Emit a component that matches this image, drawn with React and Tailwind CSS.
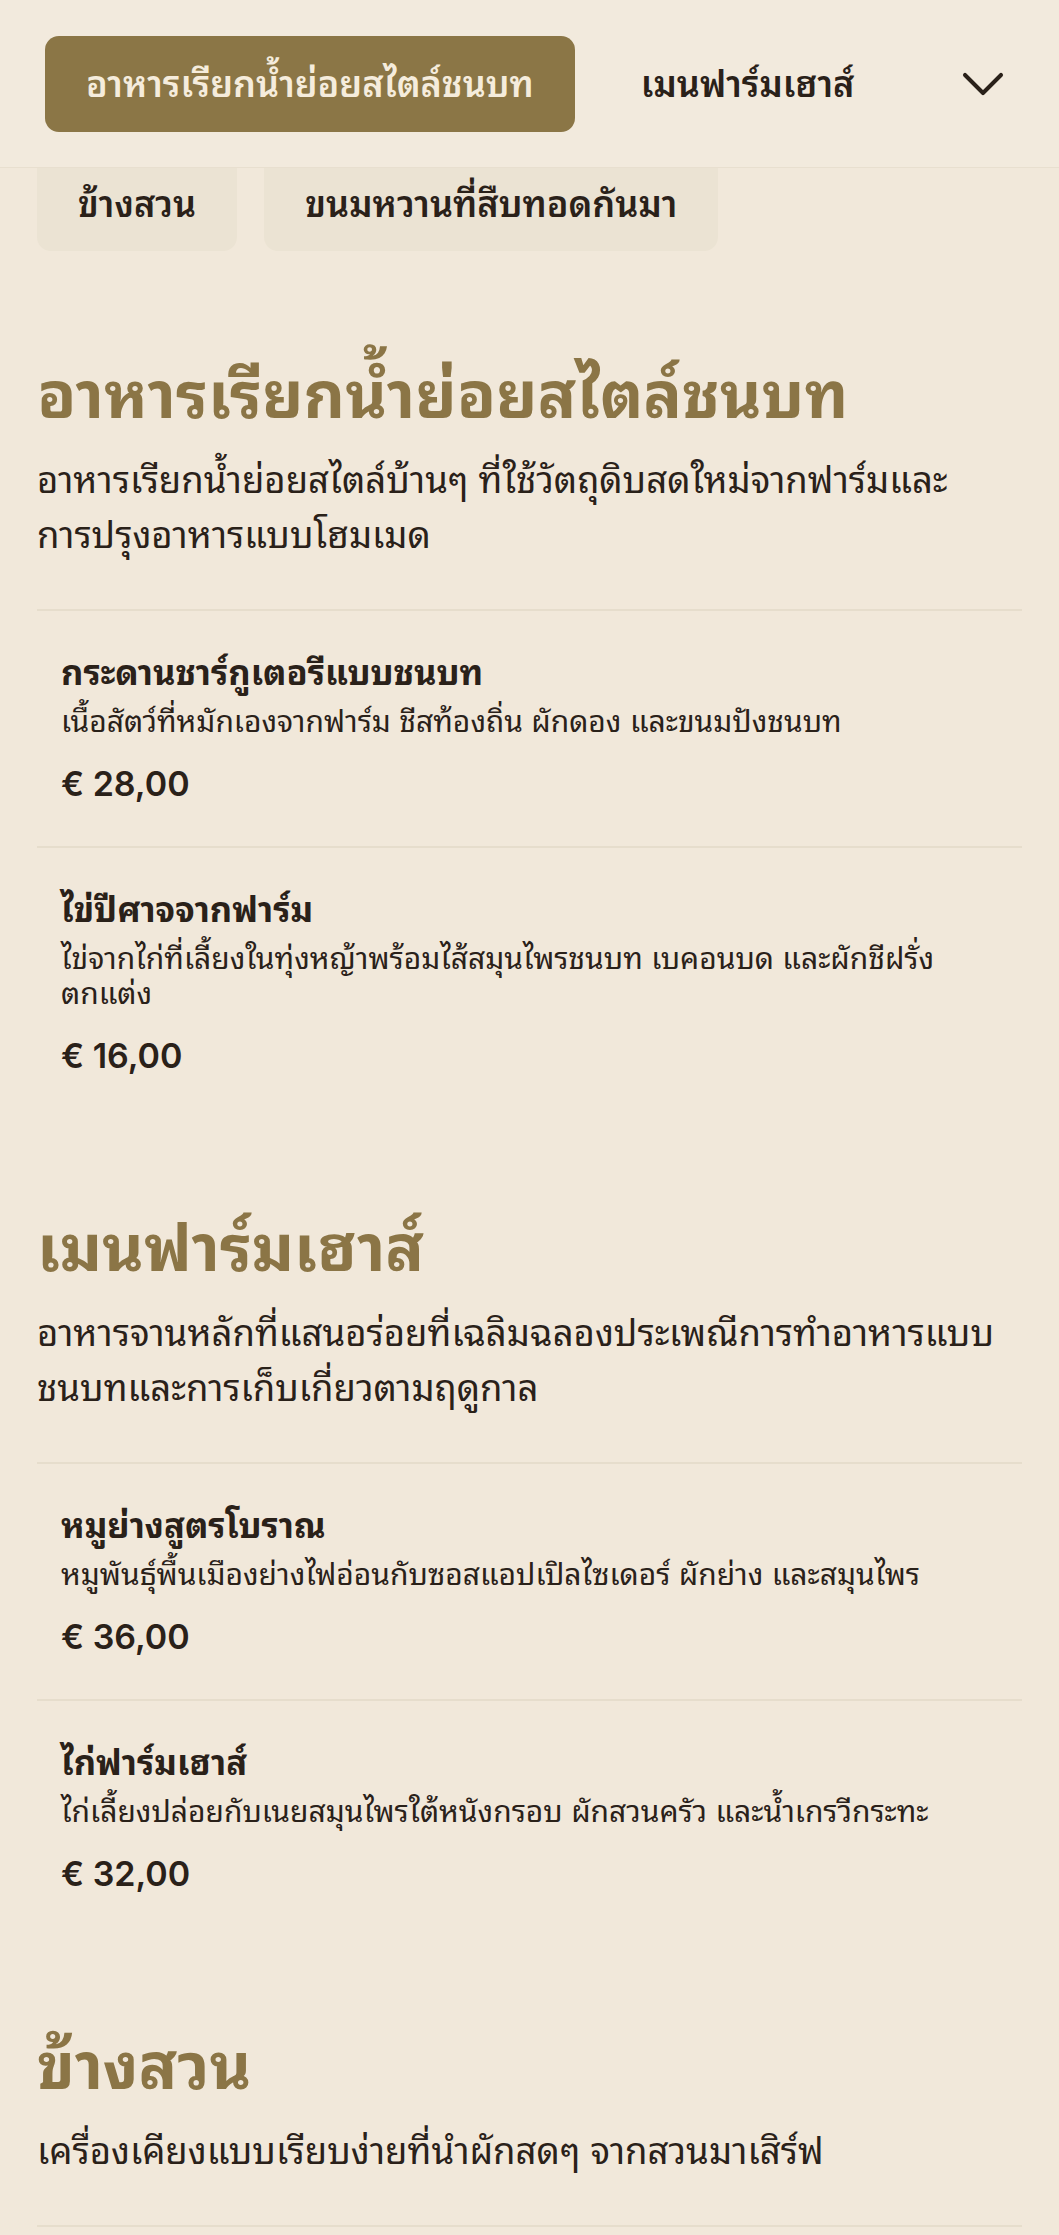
import React from "react";
import { ChevronDown } from "lucide-react";

const sections = [
  {
    title: "อาหารเรียกน้ำย่อยสไตล์ชนบท",
    desc: "อาหารเรียกน้ำย่อยสไตล์บ้านๆ ที่ใช้วัตถุดิบสดใหม่จากฟาร์มและการปรุงอาหารแบบโฮมเมด",
    items: [
      {
        name: "กระดานชาร์กูเตอรีแบบชนบท",
        desc: "เนื้อสัตว์ที่หมักเองจากฟาร์ม ชีสท้องถิ่น ผักดอง และขนมปังชนบท",
        price: "€ 28,00",
      },
      {
        name: "ไข่ปีศาจจากฟาร์ม",
        desc: "ไข่จากไก่ที่เลี้ยงในทุ่งหญ้าพร้อมไส้สมุนไพรชนบท เบคอนบด และผักชีฝรั่งตกแต่ง",
        price: "€ 16,00",
      },
    ],
  },
  {
    title: "เมนฟาร์มเฮาส์",
    desc: "อาหารจานหลักที่แสนอร่อยที่เฉลิมฉลองประเพณีการทำอาหารแบบชนบทและการเก็บเกี่ยวตามฤดูกาล",
    items: [
      {
        name: "หมูย่างสูตรโบราณ",
        desc: "หมูพันธุ์พื้นเมืองย่างไฟอ่อนกับซอสแอปเปิลไซเดอร์ ผักย่าง และสมุนไพร",
        price: "€ 36,00",
      },
      {
        name: "ไก่ฟาร์มเฮาส์",
        desc: "ไก่เลี้ยงปล่อยกับเนยสมุนไพรใต้หนังกรอบ ผักสวนครัว และน้ำเกรวีกระทะ",
        price: "€ 32,00",
      },
    ],
  },
  {
    title: "ข้างสวน",
    desc: "เครื่องเคียงแบบเรียบง่ายที่นำผักสดๆ จากสวนมาเสิร์ฟ",
    items: [],
  },
];

const font = {
  fontFamily:
    'Inter, "Noto Sans Thai Looped", "Noto Looped Thai", "Noto Serif Thai", Garuda, Loma, Tahoma, "Noto Sans Thai", sans-serif',
};

export default function App() {
  return (
    <div className="h-[2235px] overflow-hidden bg-[#f1e8da] text-[#2a2119]" style={font}>
      <header className="h-[168px] bg-[#f2eadd] border-b border-[#e8dfcf] flex items-center pl-[45px] pr-[40px]">
        <div className="flex items-center gap-[25px] flex-1">
          <button className="h-[96px] px-[41px] rounded-[14px] bg-[#8b7646] text-[#f5ecdc] text-[36px] font-semibold leading-none whitespace-nowrap">
            อาหารเรียกน้ำย่อยสไตล์ชนบท
          </button>
          <button className="h-[96px] px-[41px] text-[36px] font-semibold leading-none text-[#2a2119] whitespace-nowrap">
            เมนฟาร์มเฮาส์
          </button>
        </div>
        <ChevronDown size={72} strokeWidth={1.35} className="text-[#2a2119] shrink-0" />
      </header>

      <div className="flex gap-[27px] px-[37px]">
        <div className="h-[83px] pb-[23px] px-[41px] rounded-b-[14px] bg-[#ebe3d3] flex items-end text-[36px] font-semibold leading-[48px] whitespace-nowrap">
          ข้างสวน
        </div>
        <div className="h-[83px] pb-[23px] px-[41px] rounded-b-[14px] bg-[#ebe3d3] flex items-end text-[36px] font-semibold leading-[48px] whitespace-nowrap">
          ขนมหวานที่สืบทอดกันมา
        </div>
      </div>

      <main className="px-[37px] pt-[104px]">
        {sections.map((s, i) => (
          <section key={i} className="mb-[90px]">
            <h2 className="text-[64px] font-bold leading-[80px] text-[#8b7546]">{s.title}</h2>
            <p className="mt-[18px] text-[36.5px] leading-[55px] pr-[20px]">{s.desc}</p>
            <div className="mt-[46px]">
              {s.items.length === 0 && <div className="border-t-2 border-[#e6ddcc] h-[40px]" />}
              {s.items.map((it, j) => (
                <div key={j} className="border-t-2 border-[#e6ddcc] pl-[24px] pr-[40px] pt-[40px] pb-[40px]">
                  <h3 className="text-[34.5px] font-bold leading-[44px]">{it.name}</h3>
                  <p className="text-[30px] leading-[35px] mt-[9px]">{it.desc}</p>
                  <p className="mt-[23px] text-[34px] font-semibold leading-[44px]">{it.price}</p>
                </div>
              ))}
            </div>
          </section>
        ))}
      </main>
    </div>
  );
}
